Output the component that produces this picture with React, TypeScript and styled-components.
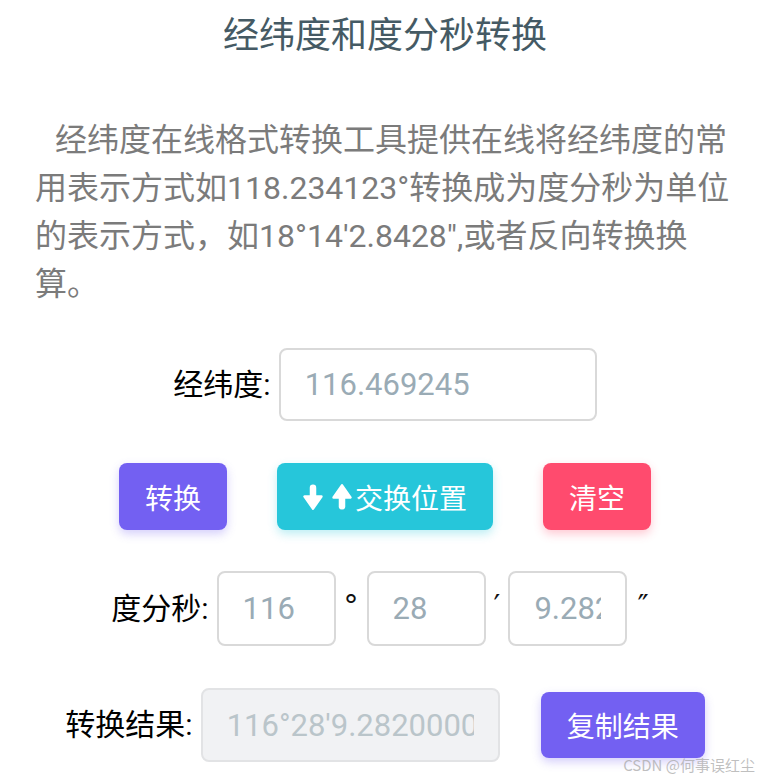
import React from "react";
import styled, { createGlobalStyle } from "styled-components";

const GlobalStyle = createGlobalStyle`
  html, body { margin: 0; padding: 0; background: #ffffff; }
  body { font-family: Roboto, "Noto Sans CJK SC", sans-serif; }
  * { box-sizing: border-box; }
`;

const Page = styled.div`
  position: relative;
  width: 762px;
  min-height: 780px;
  padding: 9px 27px 0 35px;
`;

const Title = styled.h2`
  margin: 0;
  text-align: center;
  font-size: 36px;
  line-height: 54px;
  font-weight: 400;
  color: #455a64;
`;

const Intro = styled.p`
  margin: 53px 0 0;
  font-size: 32px;
  line-height: 48px;
  color: #7b7b7b;
  text-indent: 20px;
`;

const Row = styled.div<{ $top: number; $gap?: number }>`
  display: flex;
  justify-content: center;
  align-items: center;
  margin-top: ${(p) => p.$top}px;
  gap: ${(p) => p.$gap ?? 0}px;
`;

const Field = styled.div`
  display: flex;
  align-items: center;
`;

const Label = styled.label`
  font-size: 30px;
  line-height: 1.2;
  color: #000000;
  margin-right: 8px;
  white-space: nowrap;
`;

const Input = styled.input<{ $w: number; $h?: number }>`
  width: ${(p) => p.$w}px;
  height: ${(p) => p.$h ?? 74}px;
  border: 2px solid #d9d9d9;
  border-radius: 8px;
  padding: 0 24px;
  font-family: Roboto, "Noto Sans CJK SC", sans-serif;
  font-size: 31px;
  color: #455a64;
  background: #ffffff;
  outline: none;
  &::placeholder { color: #9aabb5; opacity: 1; }
  &:disabled {
    background: #f1f2f4;
    border-color: #e2e3e5;
    color: #bac5ca;
    -webkit-text-fill-color: #bac5ca;
    opacity: 1;
  }
`;

const Unit = styled.span<{ $pad: number }>`
  padding: 0 ${(p) => p.$pad}px;
  font-family: "DejaVu Sans", sans-serif;
  font-size: 30px;
  line-height: 1;
  color: #111111;
  align-self: flex-start;
  margin-top: 20px;
`;

const Button = styled.button<{ $bg: string; $shadow: string; $h?: number }>`
  display: inline-flex;
  align-items: center;
  height: ${(p) => p.$h ?? 67}px;
  padding: 0 26px;
  border: none;
  border-radius: 8px;
  background: ${(p) => p.$bg};
  box-shadow: 0 4px 10px ${(p) => p.$shadow};
  color: #ffffff;
  font-family: Roboto, "Noto Sans CJK SC", sans-serif;
  font-size: 28px;
  cursor: pointer;
`;

const Arrows = styled.span`
  display: inline-flex;
  align-items: center;
  gap: 9px;
  margin-right: 3px;
`;

const Watermark = styled.div`
  position: absolute;
  right: 7px;
  bottom: 5px;
  font-family: "Noto Sans CJK SC", sans-serif;
  font-size: 15px;
  color: rgba(170, 170, 170, 0.75);
`;

const ArrowIcon = ({ up }: { up?: boolean }) => (
  <svg width="20" height="26" viewBox="0 0 20 26" style={up ? { transform: "rotate(180deg)" } : undefined}>
    <rect x="6.75" y="0.5" width="6.5" height="16" rx="3.2" fill="#ffffff" />
    <path d="M1.6 12.6 L18.4 12.6 L10 24.6 Z" fill="#ffffff" stroke="#ffffff" strokeWidth="2.6" strokeLinejoin="round" />
  </svg>
);

export default function App() {
  return (
    <>
      <GlobalStyle />
      <Page>
        <Title>经纬度和度分秒转换</Title>
        <Intro>
          经纬度在线格式转换工具提供在线将经纬度的常用表示方式如118.234123°转换成为度分秒为单位的表示方式，如18°14'2.8428",或者反向转换换算。
        </Intro>

        <Row $top={40}>
          <Field>
            <Label>经纬度:</Label>
            <Input $w={318} $h={73} placeholder="116.469245" />
          </Field>
        </Row>

        <Row $top={42} $gap={50}>
          <Button $bg="#7360f2" $shadow="rgba(115, 96, 242, 0.3)">转换</Button>
          <Button $bg="#26c6da" $shadow="rgba(38, 198, 218, 0.3)">
            <Arrows>
              <ArrowIcon />
              <ArrowIcon up />
            </Arrows>
            交换位置
          </Button>
          <Button $bg="#ff4b6e" $shadow="rgba(255, 75, 110, 0.3)">清空</Button>
        </Row>

        <Row $top={41}>
          <Label>度分秒:</Label>
          <Input $w={119} $h={75} placeholder="116" />
          <Unit $pad={8}>°</Unit>
          <Input $w={119} $h={75} placeholder="28" />
          <Unit $pad={8}>′</Unit>
          <Input $w={119} $h={75} placeholder="9.282" />
          <Unit $pad={10}>″</Unit>
        </Row>

        <Row $top={42} $gap={41}>
          <Field>
            <Label>转换结果:</Label>
            <Input $w={299} $h={74} disabled defaultValue="116°28′9.282000000000003″" />
          </Field>
          <Button $bg="#7360f2" $shadow="rgba(115, 96, 242, 0.3)" $h={66}>复制结果</Button>
        </Row>

        <Watermark>CSDN @何事误红尘</Watermark>
      </Page>
    </>
  );
}
